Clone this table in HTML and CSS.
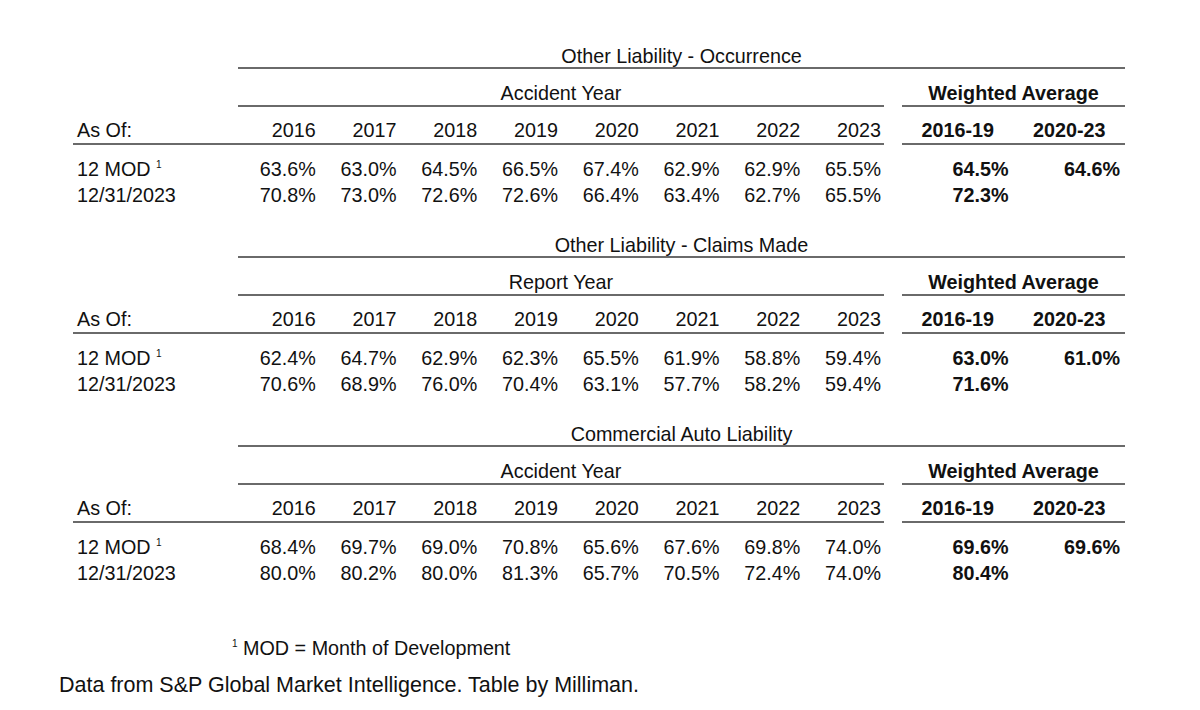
FILE: index.html
```html
<!DOCTYPE html>
<html>
<head>
<meta charset="utf-8">
<link rel="stylesheet" href="styles.css">
</head>
<body>
<div class="page">
  <div class="tables">
    <table class="lr">
      <colgroup>
        <col class="c-label"><col class="c-yr"><col class="c-yr"><col class="c-yr"><col class="c-yr"><col class="c-yr"><col class="c-yr"><col class="c-yr"><col class="c-yr"><col class="c-sp"><col class="c-wa"><col class="c-wa">
      </colgroup>
      <tr class="r-title"><td></td><td colspan="11" class="ruled center">Other Liability - Occurrence</td></tr>
      <tr class="r-sub"><td></td><td colspan="8" class="ruled center">Accident Year</td><td></td><td colspan="2" class="ruled center bold">Weighted Average</td></tr>
      <tr class="r-head"><td class="ruled label">As Of:</td><td class="ruled num">2016</td><td class="ruled num">2017</td><td class="ruled num">2018</td><td class="ruled num">2019</td><td class="ruled num">2020</td><td class="ruled num">2021</td><td class="ruled num">2022</td><td class="ruled num">2023</td><td></td><td class="ruled center bold">2016-19</td><td class="ruled center bold">2020-23</td></tr>
      <tr class="r-data r-first"><td class="label">12 MOD <sup>1</sup></td><td class="num">63.6%</td><td class="num">63.0%</td><td class="num">64.5%</td><td class="num">66.5%</td><td class="num">67.4%</td><td class="num">62.9%</td><td class="num">62.9%</td><td class="num">65.5%</td><td></td><td class="wa">64.5%</td><td class="wa">64.6%</td></tr>
      <tr class="r-data"><td class="label">12/31/2023</td><td class="num">70.8%</td><td class="num">73.0%</td><td class="num">72.6%</td><td class="num">72.6%</td><td class="num">66.4%</td><td class="num">63.4%</td><td class="num">62.7%</td><td class="num">65.5%</td><td></td><td class="wa">72.3%</td><td class="wa"></td></tr>
    </table>

    <table class="lr">
      <colgroup>
        <col class="c-label"><col class="c-yr"><col class="c-yr"><col class="c-yr"><col class="c-yr"><col class="c-yr"><col class="c-yr"><col class="c-yr"><col class="c-yr"><col class="c-sp"><col class="c-wa"><col class="c-wa">
      </colgroup>
      <tr class="r-title"><td></td><td colspan="11" class="ruled center">Other Liability - Claims Made</td></tr>
      <tr class="r-sub"><td></td><td colspan="8" class="ruled center">Report Year</td><td></td><td colspan="2" class="ruled center bold">Weighted Average</td></tr>
      <tr class="r-head"><td class="ruled label">As Of:</td><td class="ruled num">2016</td><td class="ruled num">2017</td><td class="ruled num">2018</td><td class="ruled num">2019</td><td class="ruled num">2020</td><td class="ruled num">2021</td><td class="ruled num">2022</td><td class="ruled num">2023</td><td></td><td class="ruled center bold">2016-19</td><td class="ruled center bold">2020-23</td></tr>
      <tr class="r-data r-first"><td class="label">12 MOD <sup>1</sup></td><td class="num">62.4%</td><td class="num">64.7%</td><td class="num">62.9%</td><td class="num">62.3%</td><td class="num">65.5%</td><td class="num">61.9%</td><td class="num">58.8%</td><td class="num">59.4%</td><td></td><td class="wa">63.0%</td><td class="wa">61.0%</td></tr>
      <tr class="r-data"><td class="label">12/31/2023</td><td class="num">70.6%</td><td class="num">68.9%</td><td class="num">76.0%</td><td class="num">70.4%</td><td class="num">63.1%</td><td class="num">57.7%</td><td class="num">58.2%</td><td class="num">59.4%</td><td></td><td class="wa">71.6%</td><td class="wa"></td></tr>
    </table>

    <table class="lr">
      <colgroup>
        <col class="c-label"><col class="c-yr"><col class="c-yr"><col class="c-yr"><col class="c-yr"><col class="c-yr"><col class="c-yr"><col class="c-yr"><col class="c-yr"><col class="c-sp"><col class="c-wa"><col class="c-wa">
      </colgroup>
      <tr class="r-title"><td></td><td colspan="11" class="ruled center">Commercial Auto Liability</td></tr>
      <tr class="r-sub"><td></td><td colspan="8" class="ruled center">Accident Year</td><td></td><td colspan="2" class="ruled center bold">Weighted Average</td></tr>
      <tr class="r-head"><td class="ruled label">As Of:</td><td class="ruled num">2016</td><td class="ruled num">2017</td><td class="ruled num">2018</td><td class="ruled num">2019</td><td class="ruled num">2020</td><td class="ruled num">2021</td><td class="ruled num">2022</td><td class="ruled num">2023</td><td></td><td class="ruled center bold">2016-19</td><td class="ruled center bold">2020-23</td></tr>
      <tr class="r-data r-first"><td class="label">12 MOD <sup>1</sup></td><td class="num">68.4%</td><td class="num">69.7%</td><td class="num">69.0%</td><td class="num">70.8%</td><td class="num">65.6%</td><td class="num">67.6%</td><td class="num">69.8%</td><td class="num">74.0%</td><td></td><td class="wa">69.6%</td><td class="wa">69.6%</td></tr>
      <tr class="r-data"><td class="label">12/31/2023</td><td class="num">80.0%</td><td class="num">80.2%</td><td class="num">80.0%</td><td class="num">81.3%</td><td class="num">65.7%</td><td class="num">70.5%</td><td class="num">72.4%</td><td class="num">74.0%</td><td></td><td class="wa">80.4%</td><td class="wa"></td></tr>
    </table>
  </div>

  <p class="footnote"><sup>1</sup> MOD = Month of Development</p>
  <p class="source">Data from S&amp;P Global Market Intelligence. Table by Milliman.</p>
</div>
</body>
</html>
```

FILE: styles.css
```css
html, body {
  margin: 0;
  padding: 0;
  background: #ffffff;
}

body {
  font-family: "Liberation Sans", Arial, sans-serif;
  font-size: 19.75px;
  color: #111111;
}

.page {
  width: 1200px;
  height: 710px;
  padding-top: 45px;
  box-sizing: border-box;
}

.tables {
  margin-left: 73px;
}

.lr {
  table-layout: fixed;
  width: 1052px;
  border-collapse: separate;
  border-spacing: 0;
  margin-bottom: 26px;
}

.lr:last-child {
  margin-bottom: 0;
}

.c-label { width: 165px; }
.c-yr { width: 80.75px; }
.c-sp { width: 18px; }
.c-wa { width: 111.5px; }

.lr td {
  padding: 0;
  line-height: 22px;
  white-space: nowrap;
  vertical-align: top;
}

.lr td.ruled {
  border-bottom: 2px solid #6a6a6a;
}

.r-sub td {
  padding-top: 13px;
  padding-bottom: 1px;
}

.r-head td {
  padding-top: 12px;
  padding-bottom: 2px;
}

.lr .r-data td {
  line-height: 26px;
}

.r-first td {
  padding-top: 11px;
}

.center { text-align: center; }
.bold { font-weight: bold; }

.lr td.label {
  text-align: left;
  padding-left: 4px;
}

.lr td.num {
  text-align: right;
  padding-right: 3px;
}

.lr td.wa {
  text-align: right;
  padding-right: 5px;
  font-weight: bold;
}

.lr td.center {
  text-align: center;
}

sup {
  font-size: 10px;
  line-height: 0;
  vertical-align: 8px;
}

.footnote {
  margin: 51px 0 0 232px;
  line-height: 22px;
}

.source {
  margin: 15px 0 0 59px;
  line-height: 22px;
  font-size: 21.5px;
}
```
